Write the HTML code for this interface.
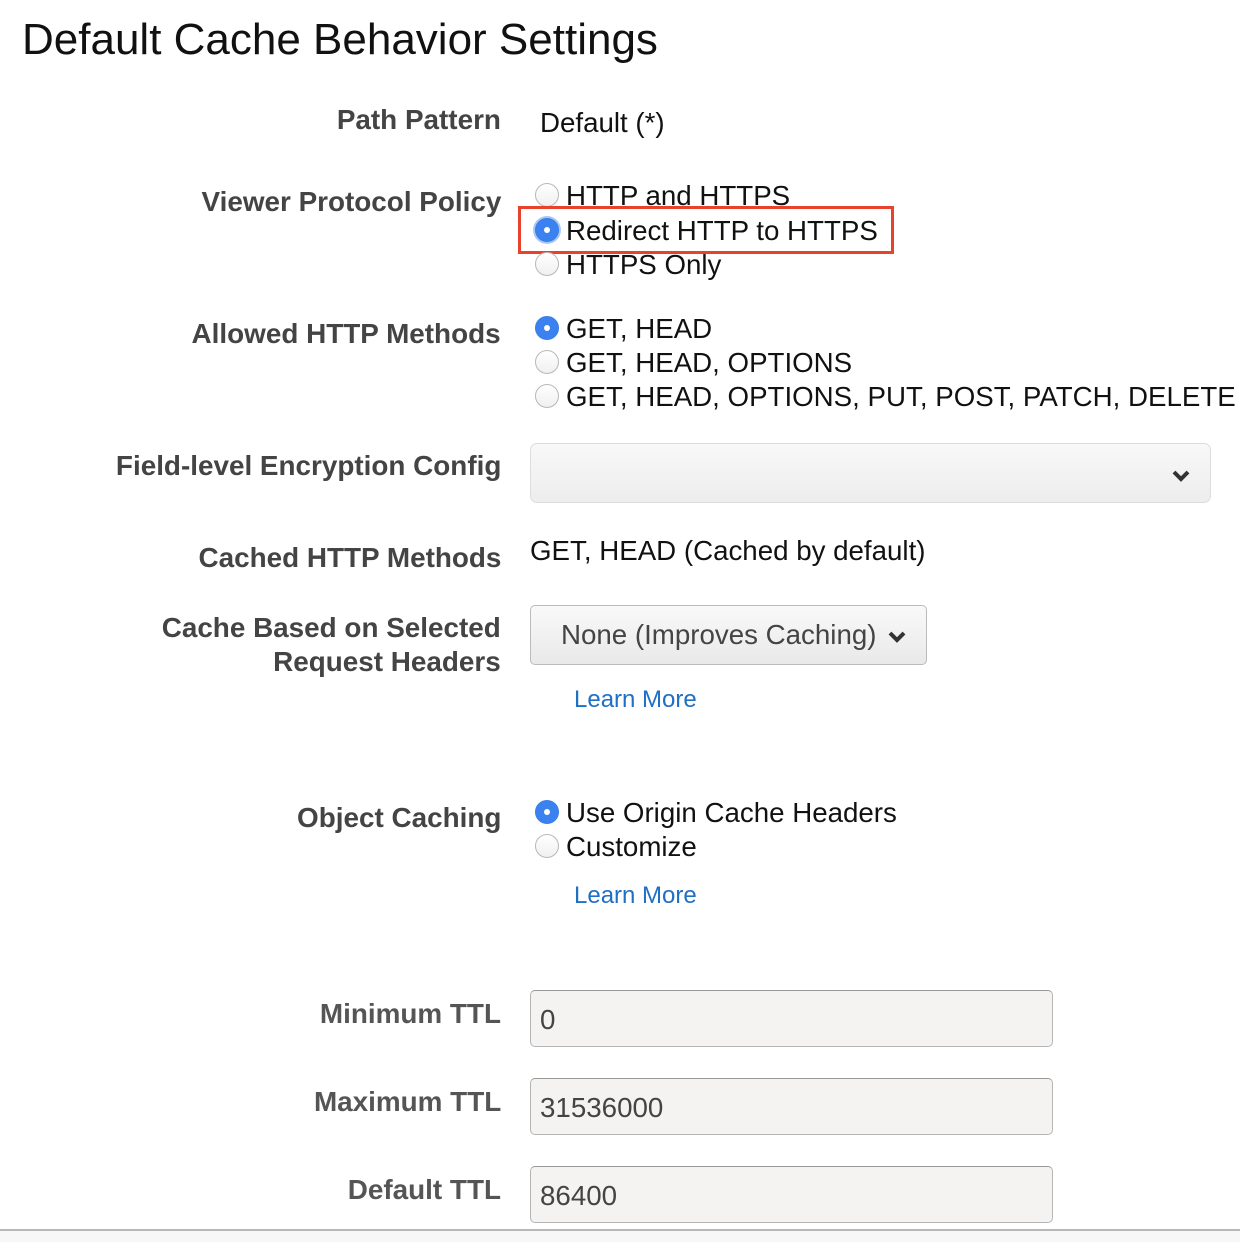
<!DOCTYPE html>
<html><head><meta charset="utf-8"><style>
body{margin:0;width:1240px;height:1242px;background:#fff;position:relative;overflow:hidden;font-family:"Liberation Sans",Arial,sans-serif;}
.a{position:absolute;white-space:nowrap;line-height:1;}
.t{left:22px;top:18px;font-size:44px;color:#111;transform:scaleX(1.0);transform-origin:left;}
.l{right:739px;font-size:28px;font-weight:bold;color:#444;transform:scaleX(.995);transform-origin:right;}
.l2{color:#555;}
.v{font-size:27.7px;color:#111;transform-origin:left;}
.r{position:absolute;width:24px;height:24px;border-radius:50%;border:1px solid #b8b8b8;background:linear-gradient(#fff,#f0f0f0);box-sizing:border-box;}
.r.on{background:#3b82f0;border-color:#3a7ee6;}
.r.on:after{content:"";position:absolute;left:8px;top:8px;width:6px;height:6px;border-radius:50%;background:#fff;}
.lm{font-size:24px;color:#1f6fc5;transform-origin:left;}
.inp{position:absolute;left:530px;width:523px;height:57px;box-sizing:border-box;border:1px solid #b5b5b5;border-top-color:#999;border-radius:5px;background:#f4f3f2;}
.inp span{position:absolute;left:9px;top:13px;font-size:28px;color:#444;transform:scaleX(.99);transform-origin:left;}
</style></head><body>
<div class="a t">Default Cache Behavior Settings</div>

<div class="a l" style="top:106px">Path Pattern</div>
<div class="a v" style="left:540px;top:109px">Default (*)</div>

<div class="a l" style="top:188px">Viewer Protocol Policy</div>
<div class="r" style="left:535px;top:183px"></div>
<div class="a v" style="left:566px;top:182px">HTTP and HTTPS</div>
<div style="position:absolute;left:518px;top:206px;width:376px;height:48px;box-sizing:border-box;border:3px solid #e8412c;background:#fff"></div>
<div class="r on" style="left:535px;top:218px;box-shadow:0 0 0 2px #a9c8f5"></div>
<div class="a v" style="left:566px;top:217px">Redirect HTTP to HTTPS</div>
<div class="r" style="left:535px;top:252px"></div>
<div class="a v" style="left:566px;top:251px">HTTPS Only</div>

<div class="a l" style="top:320px">Allowed HTTP Methods</div>
<div class="r on" style="left:535px;top:316px"></div>
<div class="a v" style="left:566px;top:315px">GET, HEAD</div>
<div class="r" style="left:535px;top:350px"></div>
<div class="a v" style="left:566px;top:349px">GET, HEAD, OPTIONS</div>
<div class="r" style="left:535px;top:384px"></div>
<div class="a v" style="left:566px;top:383px">GET, HEAD, OPTIONS, PUT, POST, PATCH, DELETE</div>

<div class="a l" style="top:452px">Field-level Encryption Config</div>
<div style="position:absolute;left:530px;top:443px;width:681px;height:60px;box-sizing:border-box;border:1px solid #ddd;border-radius:7px;background:linear-gradient(#f8f8f8,#ededed)"></div>
<svg style="position:absolute;left:1171px;top:468px" width="20" height="16"><path d="M3 4 L10 11 L17 4" fill="none" stroke="#333" stroke-width="4"/></svg>

<div class="a l" style="top:544px">Cached HTTP Methods</div>
<div class="a v" style="left:530px;top:537px">GET, HEAD (Cached by default)</div>

<div class="a l" style="top:614px">Cache Based on Selected</div>
<div class="a l" style="top:648px">Request Headers</div>
<div style="position:absolute;left:530px;top:605px;width:397px;height:60px;box-sizing:border-box;border:1px solid #bbb;border-radius:5px;background:linear-gradient(#f9f9f9,#e9e9e9)"></div>
<div class="a v" style="left:561px;top:621px;color:#444">None (Improves Caching)</div>
<svg style="position:absolute;left:887px;top:630px" width="20" height="14"><path d="M3 3 L10 10 L17 3" fill="none" stroke="#333" stroke-width="4"/></svg>
<div class="a lm" style="left:574px;top:688px">Learn More</div>

<div class="a l" style="top:804px">Object Caching</div>
<div class="r on" style="left:535px;top:800px"></div>
<div class="a v" style="left:566px;top:799px">Use Origin Cache Headers</div>
<div class="r" style="left:535px;top:834px"></div>
<div class="a v" style="left:566px;top:833px">Customize</div>
<div class="a lm" style="left:574px;top:884px">Learn More</div>

<div class="a l l2" style="top:1000px">Minimum TTL</div>
<div class="inp" style="top:990px"><span>0</span></div>
<div class="a l l2" style="top:1088px">Maximum TTL</div>
<div class="inp" style="top:1078px"><span>31536000</span></div>
<div class="a l l2" style="top:1176px">Default TTL</div>
<div class="inp" style="top:1166px"><span>86400</span></div>

<div style="position:absolute;left:0;top:1229px;width:1240px;height:2px;background:#b8b8b8"></div>
<div style="position:absolute;left:0;top:1231px;width:1240px;height:11px;background:#f7f7f7"></div>
</body></html>
